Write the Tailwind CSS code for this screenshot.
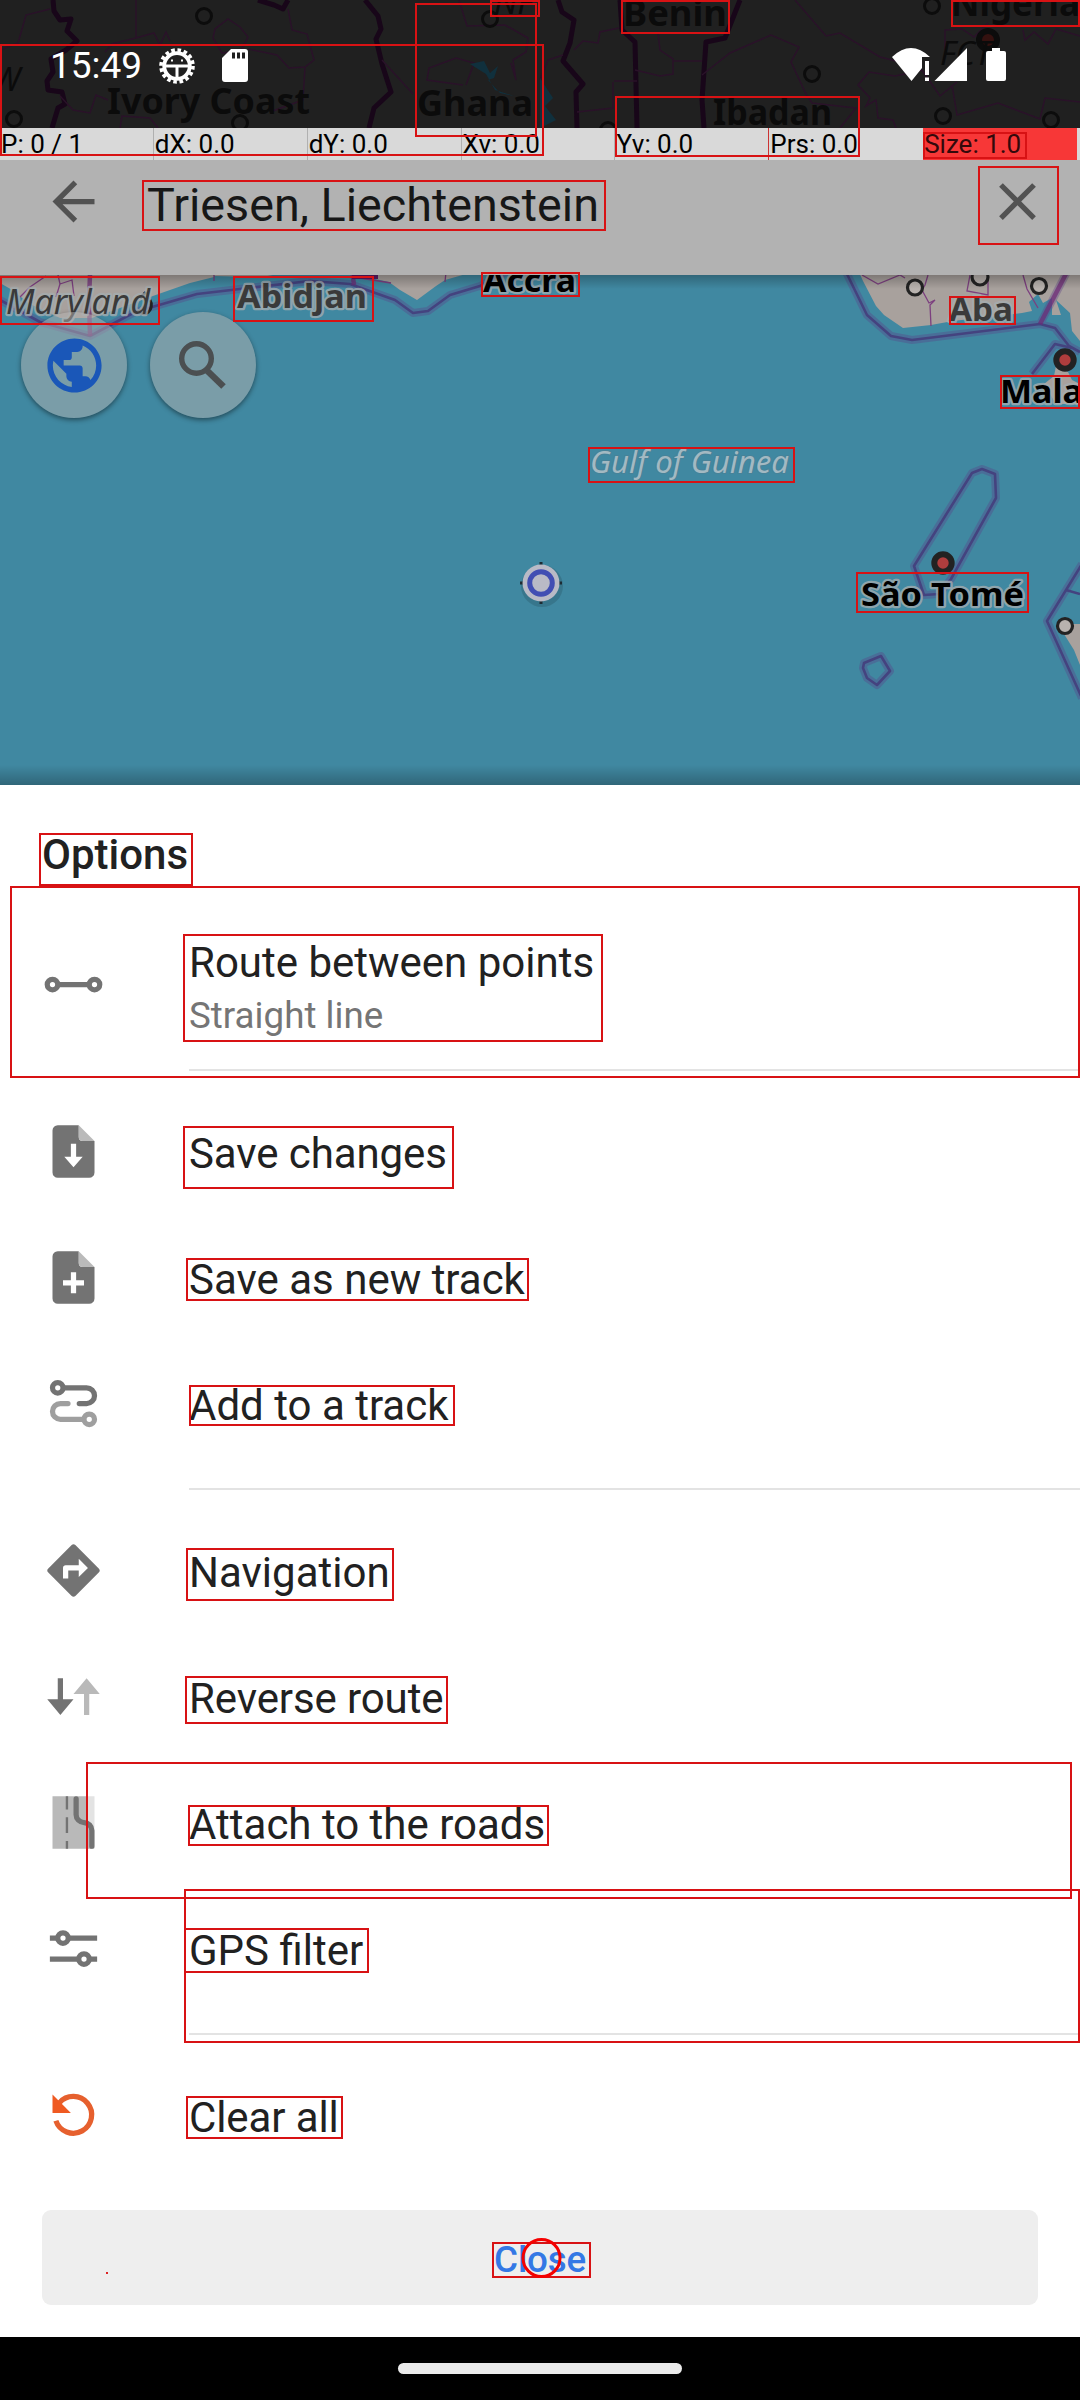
<!DOCTYPE html>
<html lang="en">
<head>
<meta charset="utf-8">
<title>Plan a route</title>
<script src="https://cdn.jsdelivr.net/npm/@tailwindcss/browser@4"></script>
</head>
<body class="bg-black">
<div class="relative w-[1080px] h-[2400px] overflow-hidden flex flex-col font-[Roboto,sans-serif] text-[#212121]">

  <!-- Map -->
  <svg class="absolute left-0 top-0" width="1080" height="785" viewBox="0 0 1080 785" fill="none">
    <defs>
      <linearGradient id="up" x1="0" y1="0" x2="0" y2="1"><stop offset="0" stop-color="#000" stop-opacity="0"/><stop offset="1" stop-color="#000" stop-opacity=".25"/></linearGradient>
      <linearGradient id="down" x1="0" y1="0" x2="0" y2="1"><stop offset="0" stop-color="#000" stop-opacity=".25"/><stop offset="1" stop-color="#000" stop-opacity="0"/></linearGradient>
    </defs>
    <rect width="1080" height="785" fill="#4088a1"/>
    <g fill="#a8a19d">
      <path d="M0 270V283L14 291 28 303 60 318H92L120 308 150 297 190 283 214 277V270z"/>
      <path d="M214 270V276L262 277 300 270zM352 270L366 277 389 282 400 290 417 300 436 286 445 280 480 270z"/>
      <path d="M858 270L863 281 876 306 884 315 903 328 931 325 953 321 1022 313 1032 311 1029 302 1038 294 1043 303 1052 298V315H1061L1056 300 1070 313 1072 331 1080 341V270z"/>
      <path d="M1056 366L1068 372 1072 380 1080 384V404H1056L1044 384 1054 376z"/>
      <path d="M1066 624H1080V665L1074 650 1064 634z"/>
    </g>
    <g stroke="#7c3f7f" stroke-width="1.3">
      <path d="M20 297L30 287 46 276M58 275L60 284 56 297M60 284L72 280 74 296M214 270V281M360 278L391 283M445 282L446 272 460 270M862 275L878 284 900 275 905 278M928 275L925 285 922 290 929 303 935 300 930 305 931 326M970 275L967 291 988 295V275M1023 275L1027 289 1038 308"/>
    </g>
    <g stroke="#5d3f86" stroke-opacity=".35" stroke-width="8" stroke-linejoin="round">
      <path d="M0 300L40 322 90 336 135 312 197 294 240 289 310 281 350 284 395 300 413 313 428 311 450 295 480 286 510 270M846 272L867 315 891 336 912 340 1040 324 1068 270M1040 324L1055 328 1069 346 1080 352M1032 374L1055 344 1072 348M972 473L982 469 995 474 996 498 951 579 939 594 924 595 914 566zM864 663L881 656 890 671 877 685 867 678 863 668zM1082 564L1047 621 1082 698"/>
    </g>
    <g stroke="#44437f" stroke-width="2.6" stroke-linejoin="round">
      <path d="M0 300L40 322 90 336 135 312 197 294 240 289 310 281 350 284 395 300 413 313 428 311 450 295 480 286 510 270M846 272L867 315 891 336 912 340 1040 324M1040 324L1055 328 1069 346 1080 352M1032 374L1055 344 1072 348M972 473L982 469 995 474 996 498 951 579 939 594 924 595 914 566zM864 663L881 656 890 671 877 685 867 678 863 668zM1082 564L1047 621 1082 698M1066 590L1080 594"/>
    </g>
    <path d="M90 275L89 300 90 336M352 270L354 285M1040 324L1068 270" stroke="#6f2876" stroke-width="4.500" stroke-opacity=".7"/>
    <path d="M352 277H378" stroke="#5b1c66" stroke-width="4"/>

    <g fill="#b8b2ae" stroke="#232323" stroke-width="3.2">
      <circle cx="915" cy="287.500" r="7.500"/><circle cx="980" cy="277" r="8"/><circle cx="1039" cy="286" r="7.500"/><circle cx="1065" cy="626" r="7.500"/>
    </g>
    <g fill="#b03d3d" stroke="#222" stroke-width="6">
      <circle cx="1065" cy="360" r="8.700"/><circle cx="943" cy="563" r="8.700"/>
    </g>
    <path d="M138 310a6 7 0 1 0 12-10M140 298l6-6" stroke="#222" stroke-width="3"/>
    <g font-family="Noto Sans, Open Sans, sans-serif" font-weight="700" font-size="33" fill="#3a3a3a" stroke="#a5adb0" stroke-opacity=".8" stroke-width="4.500" stroke-linejoin="round" paint-order="stroke">
      <text x="6" y="314" font-size="34" font-weight="400" font-style="italic" textLength="144" lengthAdjust="spacingAndGlyphs">Maryland</text>
      <text x="237" y="308" textLength="130" lengthAdjust="spacingAndGlyphs">Abidjan</text>
      <text x="483" y="292" fill="#000" textLength="93" lengthAdjust="spacingAndGlyphs">Accra</text>
      <text x="949" y="321" textLength="64" lengthAdjust="spacingAndGlyphs">Aba</text>
      <text x="1000" y="402.500" fill="#000" textLength="83" lengthAdjust="spacingAndGlyphs">Mala</text>
      <text x="861" y="605.500" fill="#000" textLength="163" lengthAdjust="spacingAndGlyphs">São Tomé</text>
      <text x="590" y="472.500" font-size="31" font-weight="400" font-style="italic" fill="#a3b9c2" stroke="#4a8196" stroke-width="2" textLength="199" lengthAdjust="spacingAndGlyphs">Gulf of Guinea</text>
    </g>

    <!-- Position marker -->
    <circle cx="542" cy="586" r="21" fill="#000" fill-opacity=".13"/>
    <path d="M520 583h42M541 562v42" stroke="#1d2b33" stroke-width="3"/>
    <circle cx="541" cy="583" r="18.500" fill="#b9bac6"/>
    <circle cx="541" cy="583" r="11.300" stroke="#414eb3" stroke-width="5"/>

    <!-- Part of the map under the status bar -->
    <rect width="1080" height="128" fill="#202020"/>
    <g stroke="#180619" stroke-width="5" stroke-linejoin="round">
      <path d="M53 0L54 11 60 20 71 19 67 31 77 41 66 50 51 59 53 72 47 81 48 90 62 92 65 104 58 108 52 128M258 0L274 5 283 9 288 0M365 0L378 16 381 29 376 39 382 64 391 92 374 108 369 128M558 0L562 12 574 20 570 43 563 61 583 84 576 92 577 128M620 0L622 30 635 42 637 128M740 0L725 38 706 42 702 100 704 128"/>
    </g>
    <g stroke="#2a1229" stroke-width="1.500">
      <path d="M50 9L26 15 18 43 0 50M136 0V38L112 44 105 52M136 38L154 33 160 45 166 32 170 41M213 38L215 29 228 19 240 27 248 37 241 51 222 53 213 38M288 9L292 30 307 34 314 60 305 67 289 68 277 55 248 49M305 67L303 100 270 112M382 60L413 94M459 0L467 26 505 25 528 38 526 52 513 60 516 80 511 63M463 85L427 80 429 68 456 58 474 63 466 85M60 96L73 110 90 113 96 95 108 100M120 128L122 116 150 118 158 128M563 55L548 60 540 80M574 50L583 41 598 43 600 32 619 28M635 70L660 76 673 74V59L660 50 658 33M673 61H702M614 81H637M613 82V108L577 112M702 75L730 53 771 35 799 47 791 62 806 94 812 103 856 108 840 128M795 0L826 36 840 33 880 57 896 61M957 82L940 96 922 70 895 76 869 72 858 85 870 98 866 106 876 100 878 118 893 120 896 128M952 85L957 115 998 103 1040 119 1045 98 1080 102M945 50V30L962 29 974 37 988 23M1023 30L1025 40 1034 32 1048 44 1056 29 1080 36"/>
    </g>
    <path d="M470 64L484 61 490 73 498 66 494 78 488 80 500 93 514 96 495 90 486 74zM540 78L553 98 545 106 556 120 540 128z" fill="#10303d"/>
    <g stroke="#0c0c0c" stroke-width="3">
      <circle cx="204" cy="16" r="7.500"/><circle cx="14" cy="119" r="7.500"/><circle cx="240" cy="123" r="7.500"/><circle cx="490" cy="19" r="7.500"/><circle cx="932" cy="6" r="7.500"/><circle cx="812" cy="74" r="7.500"/><circle cx="943" cy="116" r="7.500"/><circle cx="1051" cy="120" r="7.500"/><circle cx="608" cy="130" r="7.500"/>
      <circle cx="988" cy="40" r="9" fill="#34110f" stroke-width="6"/>
    </g>
    <g font-family="Noto Sans, Open Sans, sans-serif" font-weight="700" font-size="35" fill="#0b0b0b">
      <text x="107" y="114" textLength="203" lengthAdjust="spacingAndGlyphs">Ivory Coast</text>
      <text x="417" y="116" textLength="116" lengthAdjust="spacingAndGlyphs">Ghana</text>
      <text x="623" y="26" textLength="104" lengthAdjust="spacingAndGlyphs">Benin</text>
      <text x="951" y="16" textLength="129" lengthAdjust="spacingAndGlyphs">Nigeria</text>
      <text x="713" y="125" textLength="119" lengthAdjust="spacingAndGlyphs">Ibadan</text>
      <g font-weight="400" font-style="italic" font-size="33">
        <text x="-8" y="91">W</text><text x="494" y="14">NF</text><text x="940" y="65">FCT</text>
      </g>
    </g>
    <rect y="275" width="1080" height="14" fill="url(#down)"/>
    <rect y="765" width="1080" height="20" fill="url(#up)"/>
    <rect y="128" width="1080" height="32" fill="#d9d9d9"/>
  </svg>

  <!-- Status bar -->
  <div class="relative h-[128px] shrink-0 flex items-center pl-[50px] pr-[74px]">
    <span class="text-[37px] leading-[44px] text-white pt-[4px] w-[109px]">15:49</span>
    <svg class="mt-[3px]" width="36" height="38" viewBox="0 0 36 38" fill="none" stroke="#fff">
      <path d="M6 17A12 12 0 0 1 30 17z" fill="#202020" stroke="none"/>
      <circle cx="18" cy="19" r="12.800" stroke-width="3.800"/>
      <circle cx="18" cy="19" r="16" stroke-width="3.600" stroke-dasharray="3.600 2.683"/>
      <path d="M5 19H31M18 19V32" stroke-width="3"/>
      <path d="M12 13.500h2M22 13.500h2" stroke-width="2"/>
    </svg>
    <svg class="ml-[27px] mt-[2px]" width="26" height="33" viewBox="0 0 26 33"><path d="M9 0H23a3 3 0 0 1 3 3V30a3 3 0 0 1-3 3H3a3 3 0 0 1-3-3V9z" fill="#fff"/><path d="M10 3.500h3v6h-3zM15 3.500h3v6h-3zM20 3.500h3v6h-3z" fill="#202020"/></svg>
    <svg class="ml-auto" width="114" height="33" viewBox="892 47 114 33" fill="#fff">
      <path d="M892 56Q911 38 930 56H922V67L911.500 80z"/><path d="M925 60h4v14h-4zM925 76.500h4v3.500h-4zM934.500 80L967 47V80z"/><path d="M992 47h8v3h4a2 2 0 0 1 2 2V78a2 2 0 0 1-2 2H988a2 2 0 0 1-2-2V52a2 2 0 0 1 2-2h4z"/>
    </svg>
  </div>

  <!-- Pointer readout -->
  <div class="relative h-[32px] shrink-0 grid grid-cols-7 w-[1077px] text-[26px] leading-[32px] text-black whitespace-nowrap">
    <div class="pl-px border-r border-[#b0b0b0]">P: 0 / 1</div>
    <div class="pl-px border-r border-[#b0b0b0]">dX: 0.0</div>
    <div class="pl-px border-r border-[#b0b0b0]">dY: 0.0</div>
    <div class="pl-px border-r border-[#b0b0b0]">Xv: 0.0</div>
    <div class="pl-px border-r border-[#c33]">Yv: 0.0</div>
    <div class="pl-px">Prs: 0.0</div>
    <div class="pl-px bg-[#f73737] text-[#33090b]">Size: 1.0</div>
  </div>

  <!-- Toolbar -->
  <div class="relative h-[115px] shrink-0 bg-[#b2b2b2] flex items-start pl-[42px] pr-[31px]">
    <svg class="mt-[10px]" width="63" height="63" viewBox="0 0 24 24" fill="#525252"><path d="M20 11H7.830l5.590-5.590L12 4l-8 8 8 8 1.410-1.410L7.830 13H20v-2z"/></svg>
    <span class="ml-[42px] mt-[17px] text-[46.700px] leading-[56px] text-[#171717] whitespace-nowrap">Triesen, Liechtenstein</span>
    <svg class="ml-auto mt-[10px]" width="63" height="63" viewBox="0 0 24 24" fill="#525252"><path d="M19 6.410L17.590 5 12 10.590 6.410 5 5 6.410 10.590 12 5 17.590 6.410 19 12 13.410 17.590 19 19 17.590 13.410 12z"/></svg>
  </div>

  <!-- Map buttons -->
  <div class="relative h-[510px] shrink-0 flex gap-[23px] pl-[21px] pt-[37px]">
    <div class="size-[106px] rounded-full bg-[#b4b1af]/50 shadow-[0_2px_5px_rgba(0,0,0,0.45)] flex items-center justify-center">
      <svg width="65" height="65" viewBox="0 0 24 24" fill="#1a57b8"><path d="M12 2C6.480 2 2 6.480 2 12s4.480 10 10 10 10-4.480 10-10S17.520 2 12 2zm-1 17.930c-3.950-.49-7-3.850-7-7.930 0-.62.080-1.210.210-1.790L9 15v1c0 1.100.9 2 2 2v1.930zm6.900-2.540c-.26-.81-1-1.390-1.900-1.390h-1v-3c0-.55-.45-1-1-1H8v-2h2c.55 0 1-.45 1-1V7h2c1.100 0 2-.9 2-2v-.41c2.930 1.190 5 4.060 5 7.410 0 2.080-.8 3.970-2.100 5.390z"/></svg>
    </div>
    <div class="size-[106px] rounded-full bg-[#b4b1af]/50 shadow-[0_2px_5px_rgba(0,0,0,0.45)] flex items-center justify-center">
      <svg width="50" height="50" viewBox="0 0 50 50" fill="none" stroke="#4b4f51"><circle cx="18.500" cy="18.500" r="14.800" stroke-width="5.400"/><path d="M29.500 31L45.500 46.500" stroke-width="6.500"/></svg>
    </div>
  </div>

  <!-- Options sheet -->
  <div class="relative h-[1552px] shrink-0 bg-white flex flex-col">
    <div class="h-[135px] shrink-0 pl-[42px] pt-[46px] text-[42px] leading-[48px] font-medium">Options</div>

    <div class="h-[128px] shrink-0 flex items-center pl-[42px]">
      <svg width="63" height="63" viewBox="0 0 24 24" fill="none" stroke="#737373" stroke-width="2"><circle cx="4" cy="12" r="2"/><circle cx="20" cy="12" r="2"/><path d="M6 12H18"/></svg>
      <div class="ml-[84px] pt-[7px] flex flex-col">
        <span class="text-[42px] leading-[56px]">Route between points</span>
        <span class="text-[36.750px] leading-[50px] text-[#757575]">Straight line</span>
      </div>
    </div>
    <div class="ml-[189px] mt-[21px] mb-[18px] h-[2px] shrink-0 bg-[#e3e3e3]"></div>

    <div class="h-[126px] shrink-0 flex items-center gap-[84px] pl-[42px] text-[42px]">
      <svg class="mb-[2px]" width="63" height="63" viewBox="0 0 24 24"><path d="M6 2H14V6.500A1.500 1.500 0 0 0 15.500 8H20V20a2 2 0 0 1-2 2H6a2 2 0 0 1-2-2V4a2 2 0 0 1 2-2z" fill="#737373"/><path d="M14 2L20 8H15.500A1.500 1.500 0 0 1 14 6.500z" fill="#bababa"/><path d="M11 9h2v5h2.500L12 18l-3.500-4H11z" fill="#fff"/></svg>
      <span class="pt-[3px] tracking-[-0.1px]">Save changes</span>
    </div>
    <div class="h-[126px] shrink-0 flex items-center gap-[84px] pl-[42px] text-[42px]">
      <svg class="mb-[2px]" width="63" height="63" viewBox="0 0 24 24"><path d="M6 2H14V6.500A1.500 1.500 0 0 0 15.500 8H20V20a2 2 0 0 1-2 2H6a2 2 0 0 1-2-2V4a2 2 0 0 1 2-2z" fill="#737373"/><path d="M14 2L20 8H15.500A1.500 1.500 0 0 1 14 6.500z" fill="#bababa"/><path d="M11 10h2v3h3v2h-3v3h-2v-3H8v-2h3z" fill="#fff"/></svg>
      <span class="pt-[3px]">Save as new track</span>
    </div>
    <div class="h-[126px] shrink-0 flex items-center gap-[84px] pl-[42px] text-[42px]">
      <svg class="mb-[2px]" width="63" height="63" viewBox="0 0 24 24" fill="none" stroke-width="2" stroke-linecap="round"><g stroke="#737373"><circle cx="6" cy="6" r="2"/><path d="M8.500 6H17a3 3 0 0 1 0 6H14.200"/></g><g stroke="#9f9f9f"><circle cx="18" cy="18" r="2"/><path d="M15.500 18H7a3 3 0 0 1 0-6H9.900"/></g></svg>
      <span class="pt-[3px]">Add to a track</span>
    </div>
    <div class="ml-[189px] mt-[21px] mb-[18px] h-[2px] shrink-0 bg-[#e3e3e3]"></div>

    <div class="h-[126px] shrink-0 flex items-center gap-[84px] pl-[42px] text-[42px]">
      <svg class="mb-[2px]" width="63" height="63" viewBox="0 0 24 24" fill="#737373"><path d="M21.710 11.290l-9-9c-.39-.39-1.020-.39-1.410 0l-9 9c-.39.39-.39 1.020 0 1.410l9 9c.39.39 1.020.39 1.410 0l9-9c.39-.38.39-1.010 0-1.410zM14 14.500V12h-4v3H8v-4c0-.55.45-1 1-1h5V7.500l3.500 3.500-3.500 3.500z"/></svg>
      <span class="pt-[3px]">Navigation</span>
    </div>
    <div class="h-[126px] shrink-0 flex items-center gap-[84px] pl-[42px] text-[42px]">
      <svg class="mb-[2px]" width="63" height="63" viewBox="0 0 24 24"><path d="M6 5h2v8h4l-5 6-5-6h4z" fill="#737373"/><path d="M16 19h2v-8h4l-5-6-5 6h4z" fill="#b9b9b9"/></svg>
      <span class="pt-[3px] tracking-[-0.1px]">Reverse route</span>
    </div>
    <div class="h-[126px] shrink-0 flex items-center gap-[84px] pl-[42px] text-[42px]">
      <svg class="mb-[2px]" width="63" height="63" viewBox="0 0 24 24" fill="none"><path d="M17 2h3v20h-3z" fill="#e3e3e3"/><path d="M4 2h13v9.500l2 2V22H4z" fill="#b9b9b9"/><path d="M9.500 2v5M9.500 10v6M9.500 19v3" stroke="#737373" stroke-width=".9"/><path d="M13 3v6a3 3 0 0 0 3 3 3 3 0 0 1 3 3v6" stroke="#737373" stroke-width="2" stroke-linecap="round"/></svg>
      <span class="pt-[3px]">Attach to the roads</span>
    </div>
    <div class="h-[126px] shrink-0 flex items-center gap-[84px] pl-[42px] text-[42px]">
      <svg class="mb-[2px]" width="63" height="63" viewBox="0 0 24 24" fill="none" stroke="#737373" stroke-width="2"><circle cx="8" cy="8" r="2"/><circle cx="16" cy="16" r="2"/><path d="M3 8H6M10 8H21M3 16H14M18 16H21"/></svg>
      <span class="pt-[3px]">GPS filter</span>
    </div>
    <div class="ml-[189px] mt-[21px] mb-[18px] h-[2px] shrink-0 bg-[#e3e3e3]"></div>

    <div class="h-[126px] shrink-0 flex items-center gap-[84px] pl-[42px] text-[42px]">
      <svg class="mb-[2px]" width="63" height="63" viewBox="0 0 24 24" fill="none"><path d="M5.290 14A7 7 0 1 0 6.600 7.200" stroke="#e6602e" stroke-width="2"/><path d="M4 4V11H11z" fill="#ef5a22"/></svg>
      <span class="pt-[3px] tracking-[-0.1px]">Clear all</span>
    </div>

    <div class="mx-[42px] mt-[31px] h-[95px] shrink-0 rounded-[9px] bg-[#eee] flex items-center justify-center text-[36.750px] font-medium text-[#3478e5]"><span class="pt-[4px] tracking-[-0.2px]">Close</span></div>
  </div>

  <!-- Gesture bar -->
  <div class="relative h-[63px] shrink-0 bg-black flex justify-center pt-[26px]"><div class="w-[284px] h-[11px] rounded-full bg-[#ebebeb]"></div></div>

  <!-- Bounds overlay -->
  <svg class="absolute left-0 top-0" width="1080" height="2400" viewBox="0 0 1080 2400" fill="none" stroke="#d81214" stroke-width="2">
    <path d="M1 45H543V155H1zM416 4H536V136H416zM491 1H539V16H491zM622 1H729V33H622zM952 1H1079V26H952zM616 97H859V156H616zM924 133H1026V158H924zM143 181H605V230H143zM979 167H1058V244H979z"/>
    <path d="M1 277H159V324H1zM234 277H373V321H234zM482 273H579V296H482zM950 297H1015V324H950zM1001 376H1079V408H1001zM589 448H794V482H589zM857 573H1028V612H857z"/>
    <path d="M40 834H192V885H40zM11 887H1079V1077H11zM184 935H602V1041H184zM184 1127H453V1188H184zM187 1259H528V1300H187zM190 1386H454V1425H190z"/>
    <path d="M187 1549H393V1600H187zM186 1677H447V1723H186zM87 1763H1071V1898H87zM189 1806H548V1845H189zM185 1890H1079V2042H185zM185 1929H368V1972H185zM187 2097H342V2138H187zM493 2243H590V2277H493z"/>
    <circle cx="541.500" cy="2258" r="18.500" stroke="#f50000" stroke-width="3"/>
    <rect x="106" y="2272" width="2" height="2" fill="#d22" stroke="none"/>
  </svg>
</div>
</body>
</html>
